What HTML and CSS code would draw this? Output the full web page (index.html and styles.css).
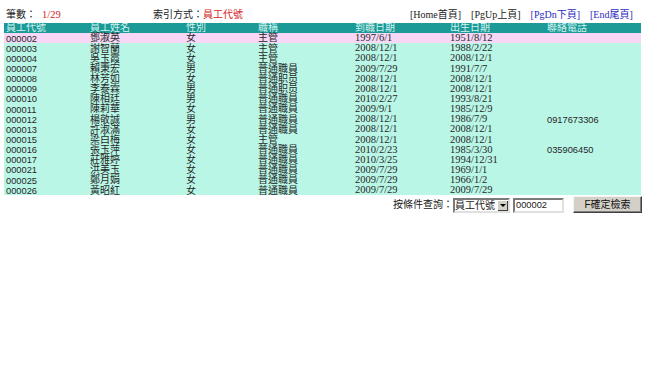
FILE: index.html
```html
<!DOCTYPE html>
<html>
<head>
<meta charset="utf-8">
<link rel="stylesheet" href="styles.css">
</head>
<body>
<div class="topbar">
  <div class="count">筆數：<span class="red num">1/29</span></div>
  <div class="index">索引方式：<span class="red">員工代號</span></div>
  <div class="nav">
    <span class="dark">[Home首頁]</span>
    <span class="dark">[PgUp上頁]</span>
    <span class="blue">[PgDn下頁]</span>
    <span class="blue">[End尾頁]</span>
  </div>
</div>
<div class="grid">
  <div class="row head"><span>員工代號</span><span>員工姓名</span><span>性別</span><span>職稱</span><span>到職日期</span><span>出生日期</span><span>聯絡電話</span></div>
  <div class="row sel"><span class="code">000002</span><span>鄧淑英</span><span>女</span><span>主管</span><span class="date">1997/6/1</span><span class="date">1951/8/12</span><span class="code"></span></div>
  <div class="row"><span class="code">000003</span><span>謝智蘭</span><span>女</span><span>主管</span><span class="date">2008/12/1</span><span class="date">1988/2/22</span><span class="code"></span></div>
  <div class="row"><span class="code">000004</span><span>吳玉霞</span><span>女</span><span>主管</span><span class="date">2008/12/1</span><span class="date">2008/12/1</span><span class="code"></span></div>
  <div class="row"><span class="code">000007</span><span>賴秉宏</span><span>男</span><span>普通職員</span><span class="date">2009/7/29</span><span class="date">1991/7/7</span><span class="code"></span></div>
  <div class="row"><span class="code">000008</span><span>林芳如</span><span>女</span><span>普通职员</span><span class="date">2008/12/1</span><span class="date">2008/12/1</span><span class="code"></span></div>
  <div class="row"><span class="code">000009</span><span>李泰霖</span><span>男</span><span>普通职员</span><span class="date">2008/12/1</span><span class="date">2008/12/1</span><span class="code"></span></div>
  <div class="row"><span class="code">000010</span><span>陳相廷</span><span>男</span><span>普通職員</span><span class="date">2010/2/27</span><span class="date">1993/8/21</span><span class="code"></span></div>
  <div class="row"><span class="code">000011</span><span>陳莉華</span><span>女</span><span>普通職員</span><span class="date">2009/9/1</span><span class="date">1985/12/9</span><span class="code"></span></div>
  <div class="row"><span class="code">000012</span><span>楊敬誠</span><span>男</span><span>普通職員</span><span class="date">2008/12/1</span><span class="date">1986/7/9</span><span class="code">0917673306</span></div>
  <div class="row"><span class="code">000013</span><span>許淑滿</span><span>女</span><span>普通職員</span><span class="date">2008/12/1</span><span class="date">2008/12/1</span><span class="code"></span></div>
  <div class="row"><span class="code">000015</span><span>梁白梅</span><span>女</span><span>主管</span><span class="date">2008/12/1</span><span class="date">2008/12/1</span><span class="code"></span></div>
  <div class="row"><span class="code">000016</span><span>張玉萍</span><span>女</span><span>普通職員</span><span class="date">2010/2/23</span><span class="date">1985/3/30</span><span class="code">035906450</span></div>
  <div class="row"><span class="code">000017</span><span>莊雅婷</span><span>女</span><span>普通職員</span><span class="date">2010/3/25</span><span class="date">1994/12/31</span><span class="code"></span></div>
  <div class="row"><span class="code">000021</span><span>洪美玉</span><span>女</span><span>普通職員</span><span class="date">2009/7/29</span><span class="date">1969/1/1</span><span class="code"></span></div>
  <div class="row"><span class="code">000025</span><span>鄭月娟</span><span>女</span><span>普通職員</span><span class="date">2009/7/29</span><span class="date">1966/1/2</span><span class="code"></span></div>
  <div class="row"><span class="code">000026</span><span>黃昭紅</span><span>女</span><span>普通職員</span><span class="date">2009/7/29</span><span class="date">2009/7/29</span><span class="code"></span></div>
</div>
<div class="search">
  <span class="label">按條件查詢：</span>
  <div class="fakeselect"><span class="seltext">員工代號</span><span class="arrow"><span class="tri"></span></span></div>
  <div class="textbox">000002</div>
  <div class="btn">F確定檢索</div>
</div>
</body>
</html>
```

FILE: styles.css
```css
html, body {
  margin: 0;
  padding: 0;
  background: #ffffff;
}
body {
  font-family: "Liberation Sans", "Noto Sans CJK TC", sans-serif;
  font-size: 10px;
  color: #1a1a1a;
  width: 647px;
  height: 383px;
  overflow: hidden;
}
.topbar {
  display: flex;
  align-items: center;
  height: 13px;
  padding-top: 8px;
  line-height: 13px;
}
.count {
  margin-left: 6px;
  width: 147px;
}
.count .num {
  margin-left: 6px;
  font-family: "Liberation Serif", serif;
  font-size: 10.5px;
}
.index {
  width: 257px;
}
.red {
  color: #d42424;
}
.nav {
  display: flex;
  gap: 10px;
  font-family: "Liberation Serif", "Noto Sans CJK TC", serif;
  font-size: 10px;
}
.dark { color: #222; }
.blue { color: #2b2bc0; }

.grid {
  margin: 2px 0 0 4px;
  width: 637px;
  display: flex;
  flex-direction: column;
}
.row {
  display: grid;
  grid-template-columns: 84px 96px 72px 97px 95px 97px 96px;
  height: 10.15px;
  align-items: start;
  background: #b9f6e6;
  color: #262626;
}
.row.sel {
  background: #f7d6f6;
}
.row.head {
  background: #1b9a98;
  color: #d4f3ef;
}
.row span {
  padding-left: 2px;
  padding-top: 0.3px;
  line-height: 10px;
  white-space: nowrap;
}
.row span.code {
  font-size: 9.3px;
  padding-top: 0.5px;
}
.row span.date {
  font-family: "Liberation Serif", serif;
  font-size: 10.5px;
  padding-top: 0;
}

.search {
  display: flex;
  justify-content: flex-end;
  align-items: center;
  height: 18px;
  padding-right: 5px;
}
.label {
  line-height: 14px;
  margin-top: 2px;
}
.fakeselect {
  display: flex;
  align-items: stretch;
  width: 53px;
  height: 11px;
  margin-top: 2px;
  border: 2px solid;
  border-color: #7a7a7a #e0e0e0 #e0e0e0 #7a7a7a;
  background: #fff;
}
.seltext {
  flex: 1;
  line-height: 11px;
  font-size: 10px;
  white-space: nowrap;
}
.arrow {
  flex: none;
  width: 10px;
  background: #d4d0c8;
  border-left: 1px solid #fff;
  border-top: 1px solid #fff;
  box-shadow: inset -1px -1px 0 #404040;
  display: flex;
  align-items: center;
  justify-content: center;
}
.tri {
  width: 0;
  height: 0;
  border-left: 3px solid transparent;
  border-right: 3px solid transparent;
  border-top: 3px solid #000;
}
.textbox {
  width: 46px;
  height: 11px;
  margin-left: 3px;
  margin-top: 2px;
  border: 2px solid;
  border-color: #7a7a7a #e0e0e0 #e0e0e0 #7a7a7a;
  background: #fff;
  font-size: 9.3px;
  line-height: 11px;
  padding-left: 1px;
}
.btn {
  width: 67px;
  height: 15px;
  margin-left: 9px;
  background: #d4d0c8;
  border: 1px solid;
  border-color: #f4f4f4 #404040 #404040 #f4f4f4;
  box-shadow: inset -1px -1px 0 #808080;
  text-align: center;
  line-height: 15px;
  font-size: 10px;
  color: #111;
}
```
